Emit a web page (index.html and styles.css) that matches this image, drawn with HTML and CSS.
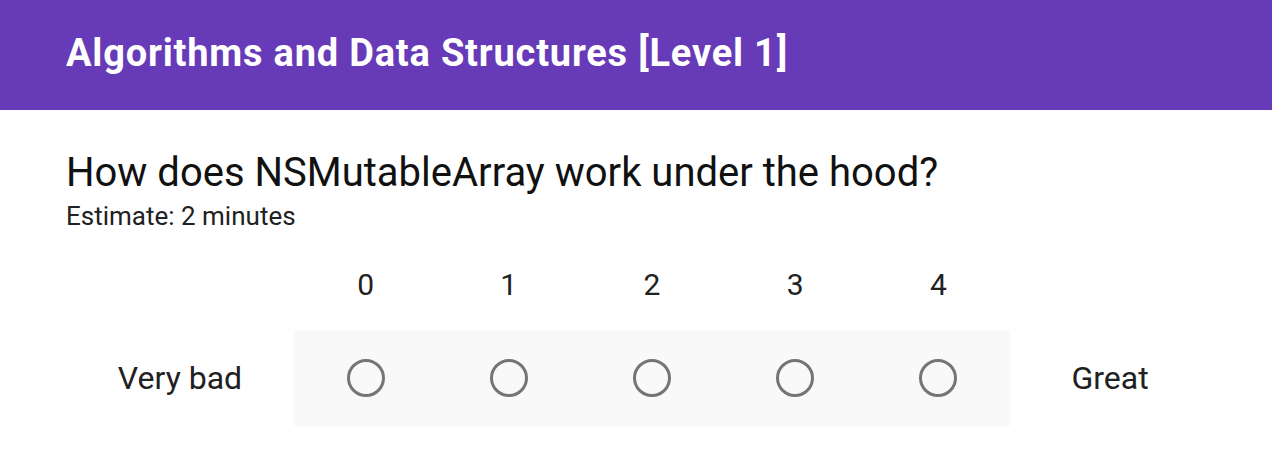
FILE: index.html
```html
<!DOCTYPE html>
<html>
<head>
<meta charset="utf-8">
<link rel="stylesheet" href="styles.css">
</head>
<body>
<header class="header">
  <h1 class="title">Algorithms and Data Structures [Level 1]</h1>
</header>
<main class="content">
  <h2 class="question">How does NSMutableArray work under the hood?</h2>
  <div class="estimate">Estimate: 2 minutes</div>
  <div class="scale">
    <div class="scale-head">
      <div class="label-col"></div>
      <div class="options">
        <div class="num">0</div>
        <div class="num">1</div>
        <div class="num">2</div>
        <div class="num">3</div>
        <div class="num">4</div>
      </div>
    </div>
    <div class="scale-row">
      <div class="label-col">Very bad</div>
      <div class="options band">
        <div class="opt"><span class="radio"></span></div>
        <div class="opt"><span class="radio"></span></div>
        <div class="opt"><span class="radio"></span></div>
        <div class="opt"><span class="radio"></span></div>
        <div class="opt"><span class="radio"></span></div>
      </div>
      <div class="label-col right">Great</div>
    </div>
  </div>
</main>
</body>
</html>
```
FILE: styles.css
```css
* { box-sizing: border-box; }
html, body { margin: 0; padding: 0; background: #fff; }
body { font-family: Roboto, "Noto Sans", Arial, sans-serif; color: #212121; }
.header {
  background: #673ab7;
  height: 110px;
  padding: 30px 0 0 66px;
}
.title {
  margin: 0;
  color: #fff;
  font-size: 38px;
  font-weight: 700;
  line-height: 46px;
  letter-spacing: 0.8px;
}
.content { padding: 39px 0 0 66px; }
.question {
  margin: 0;
  font-weight: 400;
  font-size: 40px;
  line-height: 48px;
  color: #111;
}
.estimate {
  margin-top: 4px;
  font-size: 26px;
  line-height: 30px;
  color: #212121;
}
.scale { margin-top: 36px; }
.scale-head, .scale-row { display: flex; }
.label-col {
  width: 228px;
  display: flex;
  align-items: center;
  justify-content: center;
  font-size: 32px;
}
.label-col.right { width: 200px; }
.options { display: flex; width: 716px; }
.num {
  flex: 1;
  text-align: center;
  font-size: 30px;
  line-height: 36px;
  height: 63px;
}
.band { background: #f9f9f9; height: 96px; }
.opt {
  flex: 1;
  display: flex;
  align-items: center;
  justify-content: center;
}
.radio {
  width: 38px;
  height: 38px;
  border: 3px solid #757575;
  border-radius: 50%;
}
```
